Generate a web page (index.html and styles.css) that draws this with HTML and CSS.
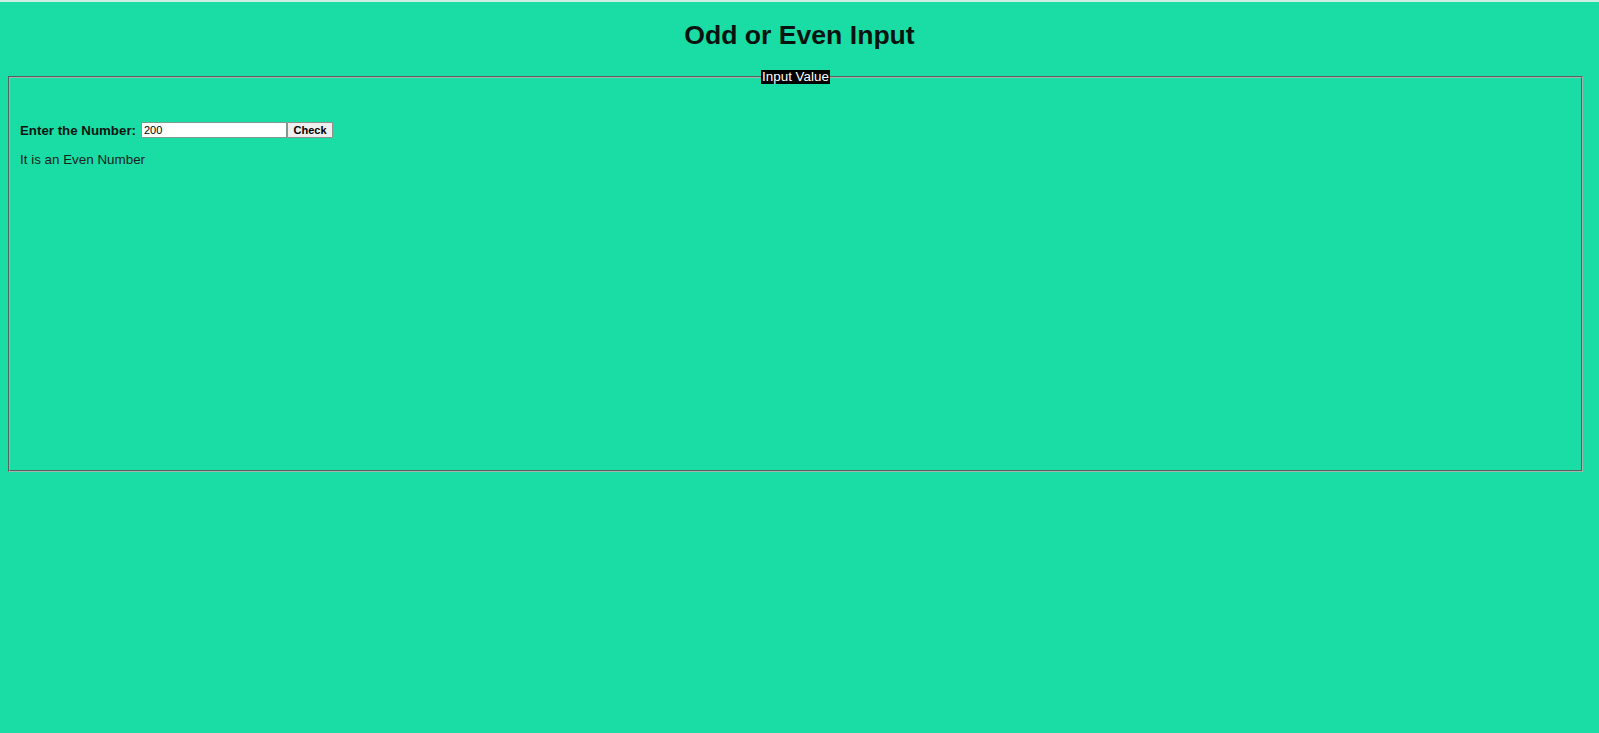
FILE: index.html
```html
<!DOCTYPE html>
<html lang="en">
<head>
<meta charset="utf-8">
<title>Odd or Even Input</title>
<link rel="stylesheet" href="styles.css">
</head>
<body>
<div class="topline"></div>
<h1 class="title">Odd or Even Input</h1>
<fieldset class="box">
  <legend class="box-legend">Input Value</legend>
  <div class="row">
    <label class="row-label" for="num">Enter the Number:</label>
    <input class="row-input" id="num" type="text" value="200">
    <button class="row-btn" type="button">Check</button>
  </div>
  <p class="result">It is an Even Number</p>
</fieldset>
</body>
</html>
```

FILE: styles.css
```css
html, body {
  margin: 0;
  padding: 0;
}
body {
  background: #19dda5;
  font-family: "Liberation Sans", Arial, sans-serif;
  color: #111;
  min-height: 733px;
}
.topline {
  height: 2px;
  background: #cdeee2;
}
.title {
  margin: 18px 0 0;
  font-size: 26.6px;
  line-height: 30px;
  font-weight: bold;
  text-align: center;
  color: #08130f;
}
.box {
  box-sizing: border-box;
  margin: 20px 16px 0 8px;
  height: 402px;
  padding: 38px 10px 0 10px;
  border: 2px groove #a2b4ad;
  min-width: 0;
}
.box-legend {
  margin: 0 auto;
  padding: 0 1px;
  background: #000;
  color: #fff;
  font-size: 13.4px;
  line-height: 14px;
}
.row {
  display: flex;
  align-items: center;
  height: 16px;
}
.row-label {
  font-size: 13.3px;
  font-weight: bold;
  line-height: 15px;
  margin-right: 5px;
  color: #0a1511;
}
.row-input {
  box-sizing: border-box;
  width: 146px;
  height: 16px;
  margin: 0;
  padding: 0 2px;
  border: 1px solid #7f9a90;
  background: #fff;
  font-family: "Liberation Sans", Arial, sans-serif;
  font-size: 11px;
  color: #000;
  outline: none;
}
.row-btn {
  box-sizing: border-box;
  width: 46px;
  height: 16px;
  margin: 0;
  padding: 0;
  border: 1px solid #8f8f8f;
  border-radius: 1px;
  background: #efefef;
  font-family: "Liberation Sans", Arial, sans-serif;
  font-size: 11px;
  font-weight: bold;
  line-height: 14px;
  color: #000;
}
.result {
  margin: 14px 0 0;
  font-size: 13.4px;
  line-height: 16px;
  color: #15221d;
}
```
